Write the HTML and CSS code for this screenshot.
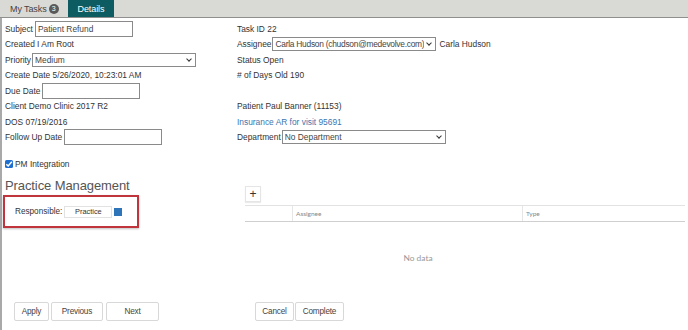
FILE: index.html
```html
<!DOCTYPE html>
<html>
<head>
<meta charset="utf-8">
<link rel="stylesheet" href="styles.css">
</head>
<body>
<div class="tabs">
  <div class="tab">My Tasks <span class="badge">3</span></div>
  <div class="tab active">Details</div>
</div>
<div class="page">
  <div class="grid">
    <div class="cell">Subject <input class="inp w98" value="Patient Refund"></div>
    <div class="cell">Task ID 22</div>
    <div class="cell">Created I Am Root</div>
    <div class="cell">Assignee <span class="sel w164"><span class="opt tight">Carla Hudson (chudson@medevolve.com)</span><i class="chev"></i></span> Carla Hudson</div>
    <div class="cell">Priority <span class="sel w164"><span class="opt">Medium</span><i class="chev"></i></span></div>
    <div class="cell">Status Open</div>
    <div class="cell">Create Date 5/26/2020, 10:23:01 AM</div>
    <div class="cell"># of Days Old 190</div>
    <div class="cell">Due Date <input class="inp w98"></div>
    <div class="cell"></div>
    <div class="cell">Client Demo Clinic 2017 R2</div>
    <div class="cell">Patient Paul Banner (11153)</div>
    <div class="cell">DOS 07/19/2016</div>
    <div class="cell link">Insurance AR for visit 95691</div>
    <div class="cell">Follow Up Date <input class="inp w98"></div>
    <div class="cell">Department <span class="sel w164"><span class="opt">No Department</span><i class="chev"></i></span></div>
  </div>
  <div class="lower">
    <div class="left">
      <div class="check"><span class="cb"><svg viewBox="0 0 8 8" width="8" height="8"><path d="M1.3 4.2 L3.2 6 L6.8 1.8" fill="none" stroke="#fff" stroke-width="1.5"/></svg></span>PM Integration</div>
      <div class="heading">Practice Management</div>
      <div class="redbox">
        <span class="resp">Responsible:</span>
        <span class="pbox">Practice</span>
        <span class="sq"></span>
      </div>
    </div>
    <div class="right">
      <div class="plus">+</div>
      <div class="thead">
        <div class="th c1"></div>
        <div class="th c2">Assignee</div>
        <div class="th c3">Type</div>
      </div>
      <div class="nodata">No data</div>
    </div>
  </div>
  <div class="buttons">
    <div class="grp">
      <button class="btn b-apply">Apply</button>
      <button class="btn b-prev">Previous</button>
      <button class="btn b-next">Next</button>
    </div>
    <div class="grp">
      <button class="btn b-cancel">Cancel</button>
      <button class="btn b-complete">Complete</button>
    </div>
  </div>
</div>
</body>
</html>
```
FILE: styles.css
```css
* { box-sizing: border-box; }
html, body { margin: 0; padding: 0; background: #fff; }
body {
  font-family: "Liberation Sans", Arial, sans-serif;
  font-size: 8.4px;
  color: #333;
  width: 688px;
  height: 330px;
  overflow: hidden;
}
.tabs {
  height: 18px;
  background: #d9d9d6;
  border-bottom: 1px solid #8f8f8f;
  display: flex;
  align-items: stretch;
}
.tab {
  display: flex;
  align-items: center;
  padding: 0 9px 0 10px;
  font-size: 9px;
  color: #444;
  letter-spacing: -0.1px;
}
.badge {
  display: inline-flex;
  align-items: center;
  justify-content: center;
  width: 10px;
  height: 10px;
  border-radius: 50%;
  background: #5a5a5a;
  color: #fff;
  font-size: 7px;
  margin-left: 2px;
}
.tab.active {
  background: #0d5c62;
  color: #fff;
  padding: 0 10px 0 10px;
}
.page {
  border-left: 2px solid #a9a9a9;
  height: 312px;
}
.grid {
  display: grid;
  grid-template-columns: 232px 1fr;
  grid-auto-rows: 15.5px;
  padding: 3px 0 0 3px;
}
.cell {
  display: flex;
  align-items: center;
  white-space: nowrap;
}
.link { color: #3a76b0; }
.inp {
  height: 16px;
  border: 1px solid #8a8a8a;
  font: inherit;
  font-size: 8.4px;
  color: #444;
  padding: 0 2px;
  margin-left: 2px;
}
.w98 { width: 98px; }
.sel {
  display: inline-flex;
  align-items: center;
  height: 14px;
  border: 1px solid #8a8a8a;
  padding: 0 3px 0 2px;
  margin: 0 3px 0 1px;
  color: #444;
}
.opt {
  flex: 1;
  min-width: 0;
  overflow: hidden;
  font-size: 8.4px;
}
.opt.tight { letter-spacing: -0.25px; }
.w164 { width: 164px; }
.chev {
  flex: none;
  width: 4px; height: 4px;
  border-right: 1.3px solid #333;
  border-bottom: 1.3px solid #333;
  transform: rotate(45deg);
  margin: -2px 1px 0 3px;
}
.lower {
  display: flex;
  height: 157px;
}
.left {
  width: 240px;
  padding-top: 13px;
}
.check {
  display: flex;
  align-items: center;
  padding-left: 3px;
  height: 12px;
}
.cb {
  width: 8px; height: 8px;
  background: #1f6fd1;
  border-radius: 1.5px;
  margin-right: 2px;
  display: inline-flex;
}
.heading {
  font-size: 13px;
  color: #555;
  margin: 8px 0 0 3px;
  letter-spacing: -0.1px;
}
.redbox {
  margin: 2px 0 0 1px;
  width: 136px;
  height: 33px;
  border: 2px solid #c0353c;
  box-shadow: 0 1px 2px rgba(0,0,0,0.25);
  display: flex;
  align-items: center;
  padding-left: 10px;
  font-size: 8.2px;
}
.resp { color: #333; }
.pbox {
  border: 1px solid #e2e2e2;
  width: 48px;
  height: 12px;
  margin-left: 2px;
  display: inline-flex;
  align-items: center;
  justify-content: center;
  font-size: 7.4px;
  color: #333;
}
.sq {
  width: 8px; height: 8px;
  background: #2e74b8;
  margin-left: 2px;
}
.right {
  flex: 1;
  padding: 41px 3px 0 3px;
}
.plus {
  width: 16px; height: 16px;
  border: 1px solid #e5e5e5;
  box-shadow: 0 1px 1px rgba(0,0,0,0.08);
  display: flex;
  align-items: center;
  justify-content: center;
  font-size: 12px;
  color: #333;
}
.thead {
  display: flex;
  margin-top: 3px;
  height: 17px;
  border-top: 1px solid #e2e2e2;
  border-bottom: 1px solid #cfcfcf;
  font-family: Lato, sans-serif;
  font-size: 6.5px;
  color: #888;
}
.th { display: flex; align-items: center; padding-left: 3px; }
.c1 { width: 47px; }
.c2 { width: 230px; border-left: 1px solid #e6e6e6; }
.c3 { flex: 1; border-left: 1px solid #e6e6e6; }
.nodata {
  text-align: center;
  font-family: Lato, sans-serif;
  font-size: 8.4px;
  color: #999;
  margin-top: 31px;
  padding-right: 94px;
}
.buttons {
  display: flex;
  padding-left: 12px;
}
.grp { display: flex; gap: 2px; }
.grp + .grp { margin-left: 96px; }
.btn {
  height: 19px;
  background: #fff;
  border: 1px solid #d8d8d8;
  border-radius: 2px;
  font-family: "Liberation Sans", Arial, sans-serif;
  font-size: 8.2px;
  color: #444;
  padding: 0;
  letter-spacing: -0.2px;
}
.b-apply { width: 35px; }
.b-prev { width: 52px; }
.b-next { width: 53px; margin-left: 1px; }
.b-cancel { width: 39px; }
.b-complete { width: 49px; margin-left: -1px; }
```
